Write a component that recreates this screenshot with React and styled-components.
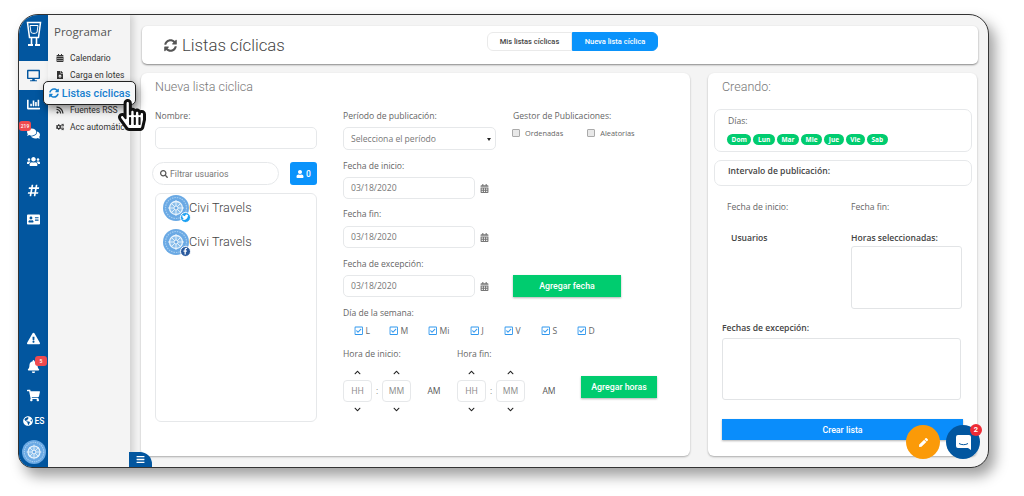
import styled, { createGlobalStyle } from "styled-components";
import {
  FaAddressCard, FaBars, FaBell, FaCalendarAlt, FaChartBar, FaChevronDown, FaChevronUp,
  FaCogs, FaComments, FaDesktop, FaExclamationTriangle, FaFacebookF, FaFileUpload, FaGlobeAmericas,
  FaHandPointer, FaHashtag, FaPen, FaRegCheckSquare, FaRegHandPointer, FaRss, FaSearch, FaShoppingCart, FaSyncAlt,
  FaTwitter, FaUser, FaUsers,
} from "react-icons/fa";

const GlobalStyle = createGlobalStyle`
  html, body { margin: 0; height: 496px; overflow: hidden; background: #fff; }
  * { box-sizing: border-box; }
  body { font-family: "Open Sans", "Liberation Sans", sans-serif; }
`;

// Marco de la captura
const Frame = styled.div`
  position: relative;
  width: 971px;
  height: 454px;
  margin: 14px 0 0 18px;
  display: flex;
  background: #f4f4f4;
  border: 1.5px solid #333;
  border-radius: 20px 20px 18px 14px;
  box-shadow: 6px 8px 14px rgba(0, 0, 0, 0.38);
  overflow: hidden;
`;

const Rail = styled.nav`
  width: 29px;
  flex: none;
  background: #02569f;
  display: flex;
  flex-direction: column;
  align-items: center;
  color: #fff;
`;

const RailLogo = styled.div`
  height: 46px;
  padding-top: 6px;
  display: flex;
  justify-content: center;
`;

const RailItem = styled.div`
  position: relative;
  width: 29px;
  height: ${(p) => p.$h || 28.7}px;
  padding-top: ${(p) => p.$pt || 0}px;
  display: flex;
  align-items: center;
  justify-content: center;
  font-size: 13px;
  background: ${(p) => (p.$active ? "#f4f4f4" : "transparent")};
  color: ${(p) => (p.$active ? "#02569f" : "#fff")};
`;

const RailSpacer = styled.div`
  flex: 1;
`;

const Badge = styled.span`
  position: absolute;
  top: ${(p) => p.$top}px;
  left: ${(p) => p.$left}px;
  min-width: 12px;
  height: 10px;
  padding: 0 1px;
  background: #ef4a4f;
  border-radius: 3px;
  color: #fff;
  font: 500 5px/10px Roboto, sans-serif;
  text-align: center;
`;

const Lang = styled.span`
  display: flex;
  align-items: center;
  gap: 2px;
  font: 500 8.5px Roboto, sans-serif;
`;

const Submenu = styled.aside`
  width: 82px;
  flex: none;
  background: #f4f4f4;
  padding: 9px 0 0 6px;
  box-shadow: 3px 0 7px rgba(0, 0, 0, 0.16);
  z-index: 1;
`;

const SubTitle = styled.h2`
  margin: 0 0 9px;
  font: 400 11.5px/16px "Open Sans", sans-serif;
  color: #555;
`;

const SubItem = styled.div`
  height: 17.3px;
  display: flex;
  align-items: center;
  gap: 6px;
  margin-left: 2px;
  white-space: nowrap;
  font: 400 8.5px Roboto, sans-serif;
  color: #333;
  svg { font-size: 8px; flex: none; }
`;

const Callout = styled.div`
  position: absolute;
  left: 24px;
  top: 66px;
  width: 93px;
  height: 24px;
  display: flex;
  align-items: center;
  justify-content: center;
  gap: 3px;
  background: #f7f8f9;
  border: 1.5px solid #222;
  border-radius: 5px;
  color: #1780cf;
  font: 500 10.8px Roboto, sans-serif;
  box-shadow: 2px 4px 8px rgba(0, 0, 0, 0.45);
  z-index: 5;
`;

const Cursor = styled.div`
  position: absolute;
  left: 97px;
  top: 84px;
  width: 30px;
  height: 36px;
  font-size: 32px;
  z-index: 6;
  svg { position: absolute; left: 0; top: 0; }
  svg:first-child { color: #fff; }
  svg:last-child { color: #111; }
`;

const Main = styled.main`
  flex: 1;
  min-width: 0;
  padding: 11px 10px 0 11px;
  display: flex;
  flex-direction: column;
  gap: 9px;
`;

const HeaderCard = styled.header`
  position: relative;
  height: 38px;
  margin-left: 1px;
  display: flex;
  align-items: center;
  padding-left: 22px;
  gap: 5px;
  background: #fff;
  border-radius: 5px;
  box-shadow: 0 1px 2px rgba(0, 0, 0, 0.45);
`;

const PageTitle = styled.h1`
  margin: 0;
  font: 300 16.8px Roboto, sans-serif;
  color: #444;
`;

const HeaderIcon = styled.span`
  display: flex;
  font-size: 13px;
  color: #555;
`;

const Tabs = styled.div`
  position: absolute;
  left: 345px;
  top: 6px;
  display: flex;
  height: 19px;
`;

const Tab = styled.div`
  width: ${(p) => p.$w}px;
  display: flex;
  align-items: center;
  justify-content: center;
  font: 500 7.5px Roboto, sans-serif;
  border-radius: ${(p) => (p.$active ? "0 6px 6px 0" : "6px 0 0 6px")};
  border: 1px solid ${(p) => (p.$active ? "#0a93fb" : "#eaeaea")};
  background: ${(p) => (p.$active ? "#0a93fb" : "#fff")};
  color: ${(p) => (p.$active ? "#fff" : "#444")};
`;

const Panels = styled.div`
  flex: 1;
  display: grid;
  grid-template-columns: 549px 269px;
  column-gap: 18px;
  align-items: start;
`;

const Panel = styled.section`
  height: 383px;
  background: #fff;
  border-radius: 6px;
  box-shadow: 0 1px 2px rgba(0, 0, 0, 0.3);
  padding: ${(p) => p.$pad};
`;

const PanelTitle = styled.h3`
  margin: 0 0 0 ${(p) => p.$ml || 0}px;
  height: 16px;
  font: 300 12.5px/16px Roboto, sans-serif;
  color: #777;
`;

const FormGrid = styled.div`
  display: grid;
  grid-template-columns: 162px 1fr;
  column-gap: 26px;
  margin-top: 16px;
`;

const Column = styled.div`
  display: flex;
  flex-direction: column;
`;

const Label = styled.label`
  display: block;
  height: ${(p) => p.$h || 11}px;
  margin: ${(p) => p.$m || 0};
  font: ${(p) => (p.$bold ? 600 : 400)} 8.6px/11px "Open Sans", sans-serif;
  color: ${(p) => (p.$bold ? "#444" : "#666")};
  white-space: nowrap;
`;

const Input = styled.div`
  width: ${(p) => p.$w}px;
  height: 22px;
  flex: none;
  display: flex;
  align-items: center;
  padding-left: 7px;
  border: 1px solid #e6e8ea;
  border-radius: 5px;
  background: #fff;
  font: 400 8.6px "Open Sans", sans-serif;
  color: #777;
`;

const NameInput = styled(Input)`
  margin-top: 1px;
`;

const FilterRow = styled.div`
  display: flex;
  justify-content: space-between;
  margin: 13px 0 8px -3px;
  height: 23px;
`;

const FilterPill = styled.div`
  width: 127px;
  display: flex;
  align-items: center;
  gap: 2px;
  padding-left: 7px;
  border: 1px solid #e6e8ea;
  border-radius: 12px;
  font: 400 8.8px Roboto, sans-serif;
  color: #777;
  svg { font-size: 8px; color: #555; }
`;

const CountButton = styled.div`
  width: 27px;
  display: flex;
  align-items: center;
  justify-content: center;
  gap: 2px;
  background: #0a93fb;
  border-radius: 3px;
  color: #fff;
  font: 500 8.5px Roboto, sans-serif;
  svg { font-size: 8px; }
`;

const UserList = styled.div`
  height: 229px;
  padding: 1px 7px;
  border: 1px solid #e6e8ea;
  border-radius: 6px;
  display: flex;
  flex-direction: column;
  gap: 8px;
`;

const UserRow = styled.div`
  display: flex;
  align-items: flex-start;
  height: 26px;
  font: 300 12.7px/25px Roboto, sans-serif;
  color: #444;
`;

const AvatarWrap = styled.div`
  position: relative;
  width: 26px;
  height: 26px;
  flex: none;
`;

const Social = styled.span`
  position: absolute;
  right: -2px;
  bottom: -2px;
  width: 11px;
  height: 11px;
  display: flex;
  align-items: center;
  justify-content: center;
  border-radius: 50%;
  border: 1px solid #fff;
  background: ${(p) => p.$bg};
  color: #fff;
  font-size: 6.5px;
`;

const TwoCols = styled.div`
  display: grid;
  grid-template-columns: 170px 1fr;
  margin-bottom: ${(p) => p.$mb || 0}px;
`;

const TimeLabels = styled.div`
  display: grid;
  grid-template-columns: 114px 1fr;
`;

const SelectBox = styled(Input)`
  justify-content: space-between;
  padding-right: 4px;
  margin-top: 1px;
  height: 23px;
  &::after { content: ""; border: 2.2px solid transparent; border-top: 3px solid #222; margin-top: 3px; }
`;

const CheckRow = styled.div`
  display: flex;
  gap: 24px;
  margin: 6px 0 0 -1px;
`;

const PlainCheck = styled.span`
  display: flex;
  align-items: center;
  gap: 5px;
  font: 400 7.4px "Open Sans", sans-serif;
  color: #666;
  &::before {
    content: "";
    width: 6px;
    height: 6px;
    border: 1px solid #aaa;
    border-radius: 1px;
    background: #e8e8e8;
  }
`;

const DateRow = styled.div`
  display: flex;
  align-items: center;
  gap: 5px;
  color: #777;
  font-size: 9px;
  height: 22px;
`;

const GreenButton = styled.div`
  width: ${(p) => p.$w}px;
  height: 22px;
  margin: ${(p) => p.$m || 0};
  display: flex;
  align-items: center;
  justify-content: center;
  background: #00cc6f;
  color: #fff;
  font: 500 8.8px Roboto, sans-serif;
  box-shadow: 0 1px 2px rgba(0, 0, 0, 0.3);
`;

const Days = styled.div`
  display: flex;
  margin: 6px 0 13px 11px;
  height: 11px;
`;

const DayCheck = styled.span`
  width: ${(p) => p.$w}px;
  display: flex;
  align-items: center;
  gap: 2px;
  font: 400 8.6px "Open Sans", sans-serif;
  color: #666;
  svg { font-size: 9.5px; color: #2f97ee; }
`;

const TimeRow = styled.div`
  display: flex;
  align-items: center;
  margin-top: 9px;
`;

const Spinner = styled.div`
  width: 29px;
  display: flex;
  flex-direction: column;
  align-items: center;
  gap: 4px;
  font-size: 7px;
  color: #222;
`;

const TimeBox = styled.div`
  width: 29px;
  height: 22px;
  display: flex;
  align-items: center;
  justify-content: center;
  border: 1px solid #e6e8ea;
  border-radius: 4px;
  font: 400 8.6px "Open Sans", sans-serif;
  color: #888;
`;

const Colon = styled.span`
  width: 10px;
  text-align: center;
  font: 400 9px Roboto, sans-serif;
  color: #777;
`;

const Meridiem = styled.span`
  width: ${(p) => p.$w}px;
  text-align: center;
  font: 400 8.6px "Open Sans", sans-serif;
  color: #555;
`;

const SideBox = styled.div`
  margin: ${(p) => p.$m};
  height: ${(p) => p.$h}px;
  padding: ${(p) => p.$pad};
  border: 1px solid #e6e8ea;
  border-radius: 7px;
`;

const Chips = styled.div`
  display: flex;
  gap: 2px;
  margin: 7px 0 0 -1px;
`;

const Chip = styled.span`
  height: 11px;
  padding: 0 4.6px;
  border-radius: 6px;
  background: #00cc6f;
  color: #fff;
  font: 700 6.5px/11px "Open Sans", sans-serif;
`;

const SideRow = styled.div`
  display: grid;
  grid-template-columns: ${(p) => p.$cols};
  padding-left: ${(p) => p.$left}px;
  margin-top: ${(p) => p.$mt}px;
`;

const TextBox = styled.div`
  width: ${(p) => p.$w}px;
  height: ${(p) => p.$h}px;
  margin: ${(p) => p.$m || 0};
  border: 1px solid #e2e4e6;
  border-radius: 3px;
`;

const CreateButton = styled.div`
  width: 241px;
  height: 21px;
  margin: 19px 0 0 14px;
  display: flex;
  align-items: center;
  justify-content: center;
  background: #0a8dfb;
  color: #fff;
  font: 500 8.8px Roboto, sans-serif;
  box-shadow: 0 1px 2px rgba(0, 0, 0, 0.3);
`;

const MenuTab = styled.div`
  position: absolute;
  left: 110px;
  bottom: 0;
  width: 23px;
  height: 15px;
  display: flex;
  align-items: center;
  justify-content: center;
  background: #02569f;
  border-radius: 0 12px 0 0;
  color: #fff;
  font-size: 9px;
  z-index: 3;
`;

const Fab = styled.div`
  position: absolute;
  left: ${(p) => p.$left}px;
  top: ${(p) => p.$top}px;
  width: 34px;
  height: 34px;
  display: flex;
  align-items: center;
  justify-content: center;
  border-radius: 50%;
  background: ${(p) => p.$bg};
  color: #fff;
  font-size: 9px;
`;

const FabBadge = styled.span`
  position: absolute;
  right: -2px;
  top: -1px;
  width: 12px;
  height: 12px;
  border-radius: 50%;
  background: #ef2b35;
  color: #fff;
  font: 700 7.5px/12px Roboto, sans-serif;
  text-align: center;
`;

function Compass({ size }) {
  return (
    <svg width={size} height={size} viewBox="0 0 26 26">
      <circle cx="13" cy="13" r="13" fill="#6aa9e4" />
      <circle cx="13" cy="13" r="10.5" fill="none" stroke="#a5cdf0" strokeWidth="1.2" strokeDasharray="1.5 1" />
      <circle cx="13" cy="13" r="6.5" fill="#8cbfeb" stroke="#e8f3fc" strokeWidth="1.3" />
      <path d="M13 5v16M5 13h16M8 8l10 10M18 8L8 18" stroke="#e8f3fc" strokeWidth="0.9" />
      <circle cx="13" cy="13" r="2" fill="#6aa9e4" stroke="#fff" strokeWidth="0.8" />
    </svg>
  );
}

function Logo() {
  return (
    <svg width="16" height="26" viewBox="0 0 16 26" fill="none" stroke="#fff">
      <path d="M1.5 1.5h13l-2 15h-9z" strokeWidth="1.5" />
      <path d="M4 4.5h8l-1 7c-1.8 1.2-4.2 1.2-6 0z" strokeWidth="1" />
      <path d="M5.5 17v6M10.5 17v6" strokeWidth="1.6" />
      <path d="M2 24h5M9 24h5" strokeWidth="2" />
    </svg>
  );
}

function ChatIcon() {
  return (
    <svg width="17" height="17" viewBox="0 0 17 17">
      <path d="M3 1h11a2 2 0 0 1 2 2v13l-3-2H3a2 2 0 0 1-2-2V3a2 2 0 0 1 2-2z" fill="#fff" />
      <path d="M4 9.5c2.5 1.6 6.5 1.6 9 0" stroke="#02569f" strokeWidth="1" fill="none" />
    </svg>
  );
}

function TimeSpinner({ label }) {
  return (
    <Spinner>
      <FaChevronUp />
      <TimeBox>{label}</TimeBox>
      <FaChevronDown />
    </Spinner>
  );
}

const semana = [["L", 35], ["M", 39], ["Mi", 42], ["J", 34], ["V", 37], ["S", 36], ["D", 30]];
const chips = ["Dom", "Lun", "Mar", "Mie", "Jue", "Vie", "Sab"];

export default function App() {
  return (
    <>
      <GlobalStyle />
      <Frame>
        <Rail>
          <RailLogo><Logo /></RailLogo>
          <RailItem $active $h={29}><FaDesktop /></RailItem>
          <RailItem><FaChartBar /></RailItem>
          <RailItem><FaComments /><Badge $top={2} $left={0}>219</Badge></RailItem>
          <RailItem><FaUsers /></RailItem>
          <RailItem><FaHashtag /></RailItem>
          <RailItem><FaAddressCard /></RailItem>
          <RailSpacer />
          <RailItem><FaExclamationTriangle /></RailItem>
          <RailItem><FaBell /><Badge $top={3} $left={16}>5</Badge></RailItem>
          <RailItem><FaShoppingCart /></RailItem>
          <RailItem $h={22}><Lang><FaGlobeAmericas size={10} />ES</Lang></RailItem>
          <RailItem $h={35} $pt={4}><Compass size={24} /></RailItem>
        </Rail>

        <Submenu>
          <SubTitle>Programar</SubTitle>
          <SubItem><FaCalendarAlt />Calendario</SubItem>
          <SubItem><FaFileUpload />Carga en lotes</SubItem>
          <SubItem />
          <SubItem><FaRss />Fuentes RSS</SubItem>
          <SubItem><FaCogs />Acc automáticas</SubItem>
        </Submenu>

        <Main>
          <HeaderCard>
            <HeaderIcon><FaSyncAlt /></HeaderIcon>
            <PageTitle>Listas cíclicas</PageTitle>
            <Tabs>
              <Tab $w={85}>Mis listas cíclicas</Tab>
              <Tab $w={86} $active>Nueva lista cíclica</Tab>
            </Tabs>
          </HeaderCard>

          <Panels>
            <Panel $pad="6px 14px">
              <PanelTitle>Nueva lista ciclica</PanelTitle>
              <FormGrid>
                <Column>
                  <Label $h={15}>Nombre:</Label>
                  <NameInput $w={162} />
                  <FilterRow>
                    <FilterPill><FaSearch />Filtrar usuarios</FilterPill>
                    <CountButton><FaUser />0</CountButton>
                  </FilterRow>
                  <UserList>
                    <UserRow>
                      <AvatarWrap><Compass size={26} /><Social $bg="#1da1f2"><FaTwitter /></Social></AvatarWrap>
                      Civi Travels
                    </UserRow>
                    <UserRow>
                      <AvatarWrap><Compass size={26} /><Social $bg="#2a5a9e"><FaFacebookF /></Social></AvatarWrap>
                      Civi Travels
                    </UserRow>
                  </UserList>
                </Column>

                <Column>
                  <TwoCols $mb={11}>
                    <div>
                      <Label $h={15}>Período de publicación:</Label>
                      <SelectBox $w={153}>Selecciona el período</SelectBox>
                    </div>
                    <div>
                      <Label>Gestor de Publicaciones:</Label>
                      <CheckRow>
                        <PlainCheck>Ordenadas</PlainCheck>
                        <PlainCheck>Aleatorias</PlainCheck>
                      </CheckRow>
                    </div>
                  </TwoCols>
                  <Label $h={16}>Fecha de inicio:</Label>
                  <DateRow><Input $w={132}>03/18/2020</Input><FaCalendarAlt /></DateRow>
                  <Label $h={17} $m="10px 0 0">Fecha fin:</Label>
                  <DateRow><Input $w={132}>03/18/2020</Input><FaCalendarAlt /></DateRow>
                  <Label $h={16} $m="11px 0 0">Fecha de excepción:</Label>
                  <TwoCols $mb={11}>
                    <DateRow><Input $w={132}>03/18/2020</Input><FaCalendarAlt /></DateRow>
                    <GreenButton $w={108}>Agregar fecha</GreenButton>
                  </TwoCols>
                  <Label>Día de la semana:</Label>
                  <Days>
                    {semana.map(([d, w]) => (
                      <DayCheck key={d} $w={w}><FaRegCheckSquare />{d}</DayCheck>
                    ))}
                  </Days>
                  <TimeLabels>
                    <Label>Hora de inicio:</Label>
                    <Label>Hora fin:</Label>
                  </TimeLabels>
                  <TimeRow>
                    <TimeSpinner label="HH" />
                    <Colon>:</Colon>
                    <TimeSpinner label="MM" />
                    <Meridiem $w={46}>AM</Meridiem>
                    <TimeSpinner label="HH" />
                    <Colon>:</Colon>
                    <TimeSpinner label="MM" />
                    <Meridiem $w={48}>AM</Meridiem>
                    <GreenButton $w={76} $m="-8px 0 0 8px">Agregar horas</GreenButton>
                  </TimeRow>
                </Column>
              </FormGrid>
            </Panel>

            <Panel $pad="6px 0">
              <PanelTitle $ml={14}>Creando:</PanelTitle>
              <SideBox $m="14px 5px 0 6px" $h={43} $pad="6px 13px">
                <Label>Días:</Label>
                <Chips>
                  {chips.map((c) => <Chip key={c}>{c}</Chip>)}
                </Chips>
              </SideBox>
              <SideBox $m="8px 5px 0 6px" $h={26} $pad="5px 13px">
                <Label $bold>Intervalo de publicación:</Label>
              </SideBox>
              <SideRow $cols="124px 1fr" $left={19} $mt={16}>
                <Label>Fecha de inicio:</Label>
                <Label>Fecha fin:</Label>
              </SideRow>
              <SideRow $cols="120px 1fr" $left={23} $mt={20}>
                <Label $bold>Usuarios</Label>
                <Label $bold>Horas seleccionadas:</Label>
              </SideRow>
              <TextBox $w={111} $h={63} $m="2px 0 0 143px" />
              <Label $bold $m="14px 0 4px 14px">Fechas de excepción:</Label>
              <TextBox $w={239} $h={62} $m="0 0 0 14px" />
              <CreateButton>Crear lista</CreateButton>
            </Panel>
          </Panels>
        </Main>

        <Callout><FaSyncAlt size={10} />Listas cíclicas</Callout>
        <Cursor><FaHandPointer /><FaRegHandPointer /></Cursor>
        <MenuTab><FaBars /></MenuTab>
        <Fab $left={887} $top={410} $bg="#fb9a08"><FaPen /></Fab>
        <Fab $left={927} $top={410} $bg="#02569f"><ChatIcon /><FabBadge>2</FabBadge></Fab>
      </Frame>
    </>
  );
}
